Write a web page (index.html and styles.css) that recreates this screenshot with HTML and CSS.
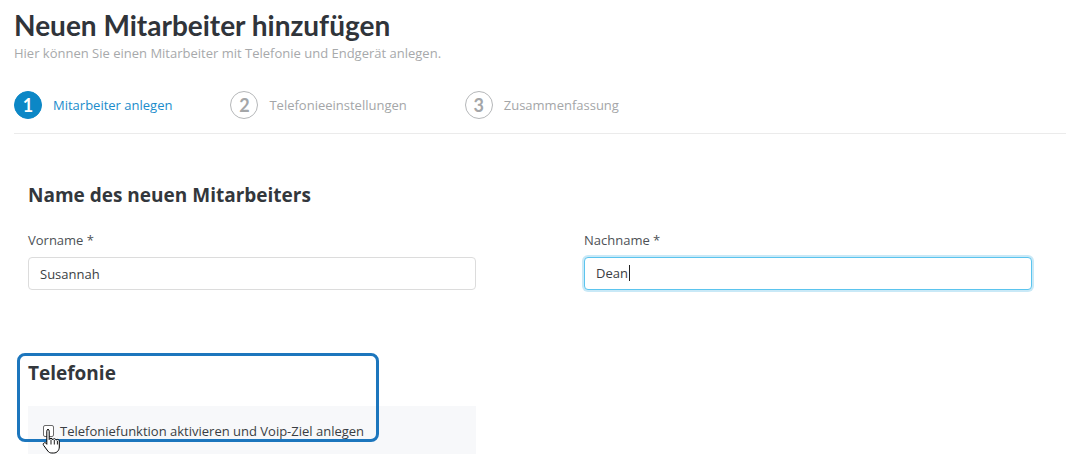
FILE: index.html
```html
<!DOCTYPE html>
<html lang="de">
<head>
    <meta charset="UTF-8">
    <title>Neuen Mitarbeiter hinzufügen</title>
    <link rel="stylesheet" href="styles.css">
</head>
<body>
    <div class="page">
        <h1 class="page-title">Neuen Mitarbeiter hinzufügen</h1>
        <p class="page-subtitle">Hier können Sie einen Mitarbeiter mit Telefonie und Endgerät anlegen.</p>

        <div class="steps">
            <div class="step step-active">
                <span class="step-num">1</span>
                <span class="step-label">Mitarbeiter anlegen</span>
            </div>
            <div class="step">
                <span class="step-num">2</span>
                <span class="step-label">Telefonieeinstellungen</span>
            </div>
            <div class="step">
                <span class="step-num">3</span>
                <span class="step-label">Zusammenfassung</span>
            </div>
        </div>

        <div class="form">
            <h2 class="section-title">Name des neuen Mitarbeiters</h2>
            <div class="form-row">
                <div class="form-group">
                    <label class="form-label">Vorname *</label>
                    <input type="text" class="form-input" value="Susannah">
                </div>
                <div class="form-group">
                    <label class="form-label">Nachname *</label>
                    <div class="form-input form-input-focus">Dean<span class="caret"></span></div>
                </div>
            </div>

            <div class="tel-section">
                <h2 class="section-title tel-title">Telefonie</h2>
                <div class="form-row">
                    <div class="check-panel">
                        <label class="check">
                            <span class="check-box"></span>
                            Telefoniefunktion aktivieren und Voip-Ziel anlegen
                        </label>
                    </div>
                </div>
                <div class="highlight"></div>
                <!-- mouse pointer over the checkbox -->
                <svg class="cursor" width="20" height="26" viewBox="0 0 20 26">
                    <path d="M5.5 1.5c1 0 1.7.7 1.7 1.7v8.3c.3-.8 1-1.2 1.8-1.2 1 0 1.6.6 1.7 1.4.3-.6.9-1 1.6-1 1 0 1.6.6 1.7 1.5.3-.5.9-.8 1.5-.8 1 0 1.8.8 1.8 1.8v5.8c0 3.4-2.4 6-5.6 6H9.8c-1.8 0-3-.7-4-2L1.6 17.3c-.6-.8-.4-1.8.3-2.3.7-.5 1.6-.4 2.2.3l.7 1V3.2c0-1 .7-1.7 1.7-1.7z" fill="#fff" stroke="#000" stroke-width="1"/>
                    <path d="M9 11.5v5M12.3 12v4.5M15.4 12.8v3.7" stroke="#000" stroke-width="0.9" fill="none"/>
                </svg>
            </div>
        </div>
    </div>
</body>
</html>
```

FILE: styles.css
```css
body {
    margin: 0;
    background-color: #ffffff;
    font-family: "Open Sans", "Lato", sans-serif;
    color: #33373c;
}

.page {
    padding: 8px 0 0 14px;
}

.page-title {
    margin: 0;
    font-family: "Lato", sans-serif;
    font-size: 28px;
    font-weight: bold;
    line-height: 34px;
    color: #30343a;
}

.page-subtitle {
    margin: 2px 0 0;
    font-size: 13px;
    color: #a7a9ab;
}

.steps {
    display: flex;
    align-items: center;
    height: 32px;
    margin-top: 27px;
    padding-bottom: 12px;
    border-bottom: 1px solid #ebebeb;
}

.step {
    display: flex;
    align-items: center;
    gap: 11px;
    margin-right: 58px;
    color: #a4a6a8;
    font-size: 13px;
}

.step-num {
    display: flex;
    justify-content: center;
    align-items: center;
    width: 26px;
    height: 26px;
    border: 1.5px solid #b5b7b9;
    border-radius: 50%;
    font-family: "Lato", sans-serif;
    font-size: 18px;
    font-weight: bold;
    color: #a4a6a8;
}

.step-active {
    color: #1b8ccb;
}

.step-active .step-num {
    background-color: #0c87c6;
    border-color: #0c87c6;
    color: #ffffff;
}

.form {
    padding: 0 34px 0 14px;
}

.section-title {
    margin: 49px 0 0;
    font-size: 19px;
    font-weight: bold;
    line-height: 24px;
    color: #33373c;
}

.form-row {
    display: grid;
    grid-template-columns: 1fr 1fr;
    gap: 108px;
    margin-top: 24px;
}

.form-label {
    display: block;
    margin-bottom: 8px;
    font-size: 13px;
    color: #4d5156;
}

.form-input {
    display: block;
    box-sizing: border-box;
    width: 100%;
    height: 33px;
    padding: 0 11px;
    font-family: inherit;
    font-size: 13px;
    line-height: 31px;
    color: #3a3e43;
    border: 1px solid #dcdcdc;
    border-radius: 4px;
    background: #ffffff;
}

.form-input-focus {
    border-color: #5bc4ee;
    box-shadow: 0 0 0 2px #c9e9f7;
}

.caret {
    display: inline-block;
    width: 1px;
    height: 16px;
    margin-left: 1px;
    vertical-align: -3px;
    background: #222;
}

.tel-section {
    position: relative;
}

.tel-title {
    margin-top: 71px;
}

.tel-section .form-row {
    margin-top: 21px;
}

.check-panel {
    background-color: #f7f8fa;
    padding: 16px 15px 20px;
}

.check {
    display: flex;
    align-items: center;
    gap: 6px;
    font-size: 13px;
    color: #3a3e43;
}

.check-box {
    box-sizing: border-box;
    width: 11px;
    height: 12px;
    border: 1px solid #6b6b6b;
    border-radius: 2px;
    background: #ffffff;
}

.highlight {
    position: absolute;
    left: -11px;
    top: -8px;
    width: 356px;
    height: 83px;
    border: 3px solid #1c76bd;
    border-radius: 8px;
}

.cursor {
    position: absolute;
    left: 14px;
    top: 67px;
}
```
